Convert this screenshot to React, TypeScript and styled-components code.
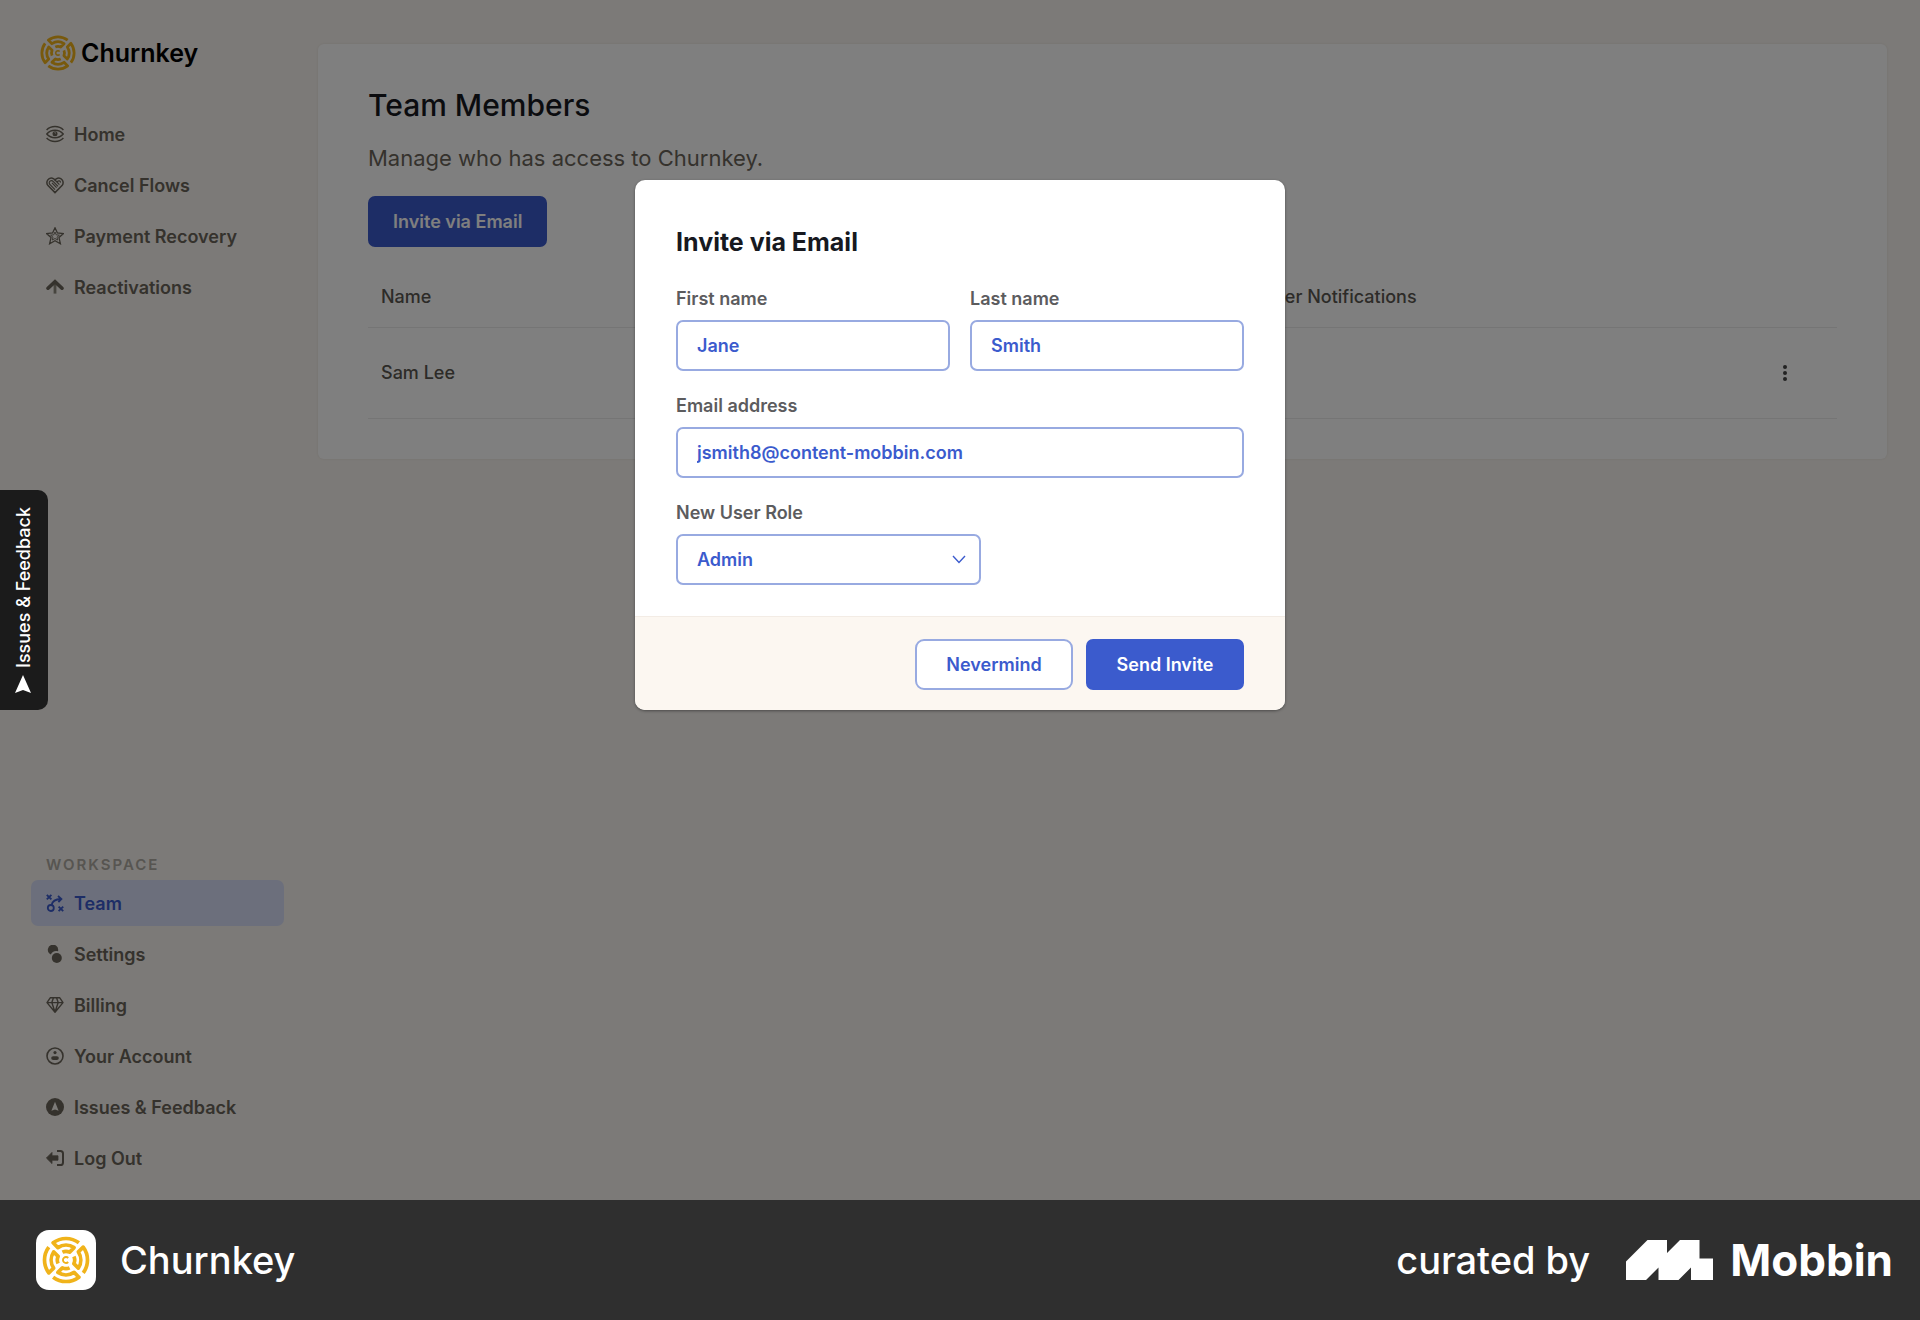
import React, { useState } from "react";
import styled, { createGlobalStyle, css } from "styled-components";

const font = `Inter, "Liberation Sans", sans-serif`;

const color = {
  canvas: "#f9f5f0",
  blue: "#3b5bcd",
  blueSoft: "#98aae1",
  ink: "#17191f",
  stone: "#6b655a",
  label: "#5c5c5e",
  cream: "#fcf7f1",
  line: "#ebebeb",
  gold: "#f0b31a",
};

const GlobalStyle = createGlobalStyle`
  *, *::before, *::after { box-sizing: border-box; }
  body { margin: 0; font-family: ${font}; background: #2f2f2f; }
  h1, h2, p, ul { margin: 0; padding: 0; }
  button, input, select { font-family: inherit; }
`;

const Page = styled.div`
  display: flex;
  flex-direction: column;
  min-height: 100vh;
`;

const Shell = styled.div`
  position: relative;
  display: flex;
  flex: 1;
  background: ${color.canvas};
`;

/* Sidebar */

const Sidebar = styled.aside`
  display: flex;
  flex-direction: column;
  flex: 0 0 318px;
  padding: 32px 34px 19px 31px;
`;

const Brand = styled.a`
  display: flex;
  align-items: center;
  gap: 5px;
  height: 42px;
  padding-left: 9px;
  margin-bottom: 37px;
  color: #000;
  font-size: 25px;
  font-weight: 600;
  text-decoration: none;
`;

const NavList = styled.ul`
  display: flex;
  flex-direction: column;
  gap: 5px;
  list-style: none;
`;

const NavLink = styled.a<{ $active?: boolean }>`
  display: flex;
  align-items: center;
  gap: 10px;
  height: 46px;
  padding: 0 15px;
  border-radius: 7px;
  font-size: 18px;
  font-weight: 600;
  white-space: nowrap;
  text-decoration: none;
  color: ${(p) => (p.$active ? color.blue : color.stone)};
  background: ${(p) => (p.$active ? "#d8dff8" : "transparent")};
`;

const NavHeading = styled.h2`
  margin-top: auto;
  padding: 0 15px 5px;
  color: #aeaaa2;
  font-size: 15px;
  line-height: 20px;
  font-weight: 600;
  letter-spacing: 2px;
  text-transform: uppercase;
`;

/* Team page */

const Main = styled.main`
  flex: 1;
  min-width: 0;
  padding: 44px 33px 44px 0;
`;

const Card = styled.section`
  padding: 40px 50px;
  border-radius: 6px;
  background: #fff;
  box-shadow: 0 0 3px rgba(0, 0, 0, 0.08);
`;

const Title = styled.h1`
  color: ${color.ink};
  font-size: 30px;
  line-height: 42px;
  font-weight: 500;
`;

const Lead = styled.p`
  margin: 17px 0 23px;
  color: ${color.stone};
  font-size: 22px;
  line-height: 30px;
`;

const Button = styled.button<{ $outline?: boolean }>`
  height: 51px;
  padding: 0 23px;
  border: 2px solid ${(p) => (p.$outline ? color.blueSoft : color.blue)};
  border-radius: ${(p) => (p.$outline ? "9px" : "7px")};
  background: ${(p) => (p.$outline ? "#fff" : color.blue)};
  color: ${(p) => (p.$outline ? color.blue : "#fff")};
  font-size: 18px;
  font-weight: 600;
  white-space: nowrap;
  cursor: pointer;
`;

const Table = styled.table`
  width: 100%;
  margin-top: 19px;
  border-collapse: collapse;
  table-layout: fixed;
  color: #5a5751;
  font-size: 18px;
  font-weight: 500;
  text-align: left;
`;

const HeadCell = styled.th<{ $width?: string }>`
  width: ${(p) => p.$width || "auto"};
  height: 61px;
  padding: 0 13px;
  border-bottom: 1px solid ${color.line};
  font-weight: 500;
`;

const Cell = styled.td`
  height: 91px;
  padding: 0 13px;
  border-bottom: 1px solid ${color.line};
`;

const MenuButton = styled.button`
  display: flex;
  padding: 10px;
  margin-left: 10px;
  border: 0;
  background: none;
  color: #444;
  cursor: pointer;
`;

/* Modal */

const Overlay = styled.div`
  position: absolute;
  inset: 0;
  display: flex;
  align-items: flex-start;
  justify-content: center;
  padding-top: 180px;
  background: rgba(0, 0, 0, 0.5);
`;

const Dialog = styled.form`
  width: 650px;
  max-width: 100%;
  overflow: hidden;
  border-radius: 10px;
  background: #fff;
  box-shadow: 0 1px 3px rgba(0, 0, 0, 0.4);
`;

const DialogBody = styled.div`
  display: flex;
  flex-direction: column;
  gap: 21px;
  padding: 40px 41px 31px;
`;

const DialogTitle = styled.h2`
  color: ${color.ink};
  font-size: 25px;
  line-height: 44px;
  font-weight: 700;
`;

const FieldRow = styled.div`
  display: grid;
  grid-template-columns: 1fr 1fr;
  gap: 20px;
`;

const Field = styled.div`
  display: flex;
  flex-direction: column;
  gap: 7px;
`;

const Label = styled.label`
  color: ${color.label};
  font-size: 18px;
  line-height: 28px;
  font-weight: 600;
`;

const control = css`
  width: 100%;
  height: 51px;
  padding: 0 19px;
  border: 2px solid ${color.blueSoft};
  border-radius: 7px;
  outline: 0;
  background: #fff;
  color: ${color.blue};
  font-size: 18px;
  font-weight: 600;
`;

const TextInput = styled.input`
  ${control}
`;

const SelectWrap = styled.div`
  position: relative;
  width: 305px;

  svg {
    position: absolute;
    top: 21px;
    right: 15px;
    pointer-events: none;
  }
`;

const Select = styled.select`
  ${control}
  appearance: none;
`;

const DialogFooter = styled.footer`
  display: flex;
  justify-content: flex-end;
  gap: 13px;
  padding: 22px 41px 20px;
  border-top: 1px solid #f3ece5;
  background: ${color.cream};
`;

const FooterButton = styled(Button)`
  width: 158px;
  padding: 0;
`;

/* Feedback tab */

const FeedbackTab = styled.button`
  position: absolute;
  left: 0;
  top: 490px;
  display: flex;
  align-items: center;
  gap: 7px;
  width: 48px;
  height: 220px;
  padding: 17px 14px 17px 15px;
  border: 0;
  border-radius: 10px 0 0 10px;
  background: #1b1b1b;
  color: #fff;
  font-size: 18px;
  font-weight: 500;
  white-space: nowrap;
  writing-mode: vertical-rl;
  transform: rotate(180deg);
  cursor: pointer;

  svg {
    flex: none;
  }
`;

/* Bottom bar */

const Bar = styled.footer`
  display: flex;
  align-items: center;
  justify-content: space-between;
  height: 120px;
  padding: 0 27px 0 36px;
  background: #2f2f2f;
  color: #fff;
  font-size: 38px;
  font-weight: 500;
`;

const BarGroup = styled.div<{ $gap: number }>`
  display: flex;
  align-items: center;
  gap: ${(p) => p.$gap}px;
`;

const AppTile = styled.span`
  display: grid;
  place-items: center;
  width: 60px;
  height: 60px;
  border-radius: 13px;
  background: #fff;
`;

const Mobbin = styled.span`
  display: flex;
  align-items: center;
  gap: 17px;
  font-size: 44px;
  font-weight: 700;
`;

/* Drawings */

const quadrant =
  "M12.9 -17.2 A21.5 21.5 0 0 0 -12.9 -17.2 L-8.1 -12.4 A14.8 14.8 0 0 1 8.1 -12.4 L3.6 -7.9 A8.6 8.6 0 0 0 -3.6 -7.9";

function ChurnkeyMark({ size }: { size: number }) {
  return (
    <svg width={size} height={size} viewBox="-24 -24 48 48" fill="none" stroke={color.gold} strokeWidth="3.7" strokeLinejoin="round" aria-hidden="true">
      {[0, 90, 180, 270].map((turn) => (
        <path key={turn} d={quadrant} transform={`rotate(${turn})`} />
      ))}
      <path d="M2.2 -2 A3 3 0 1 0 2.2 2" strokeWidth="1.9" />
    </svg>
  );
}

type IconName = "eye" | "heart" | "star" | "up" | "play" | "dots" | "gem" | "user" | "compass" | "logout";

const iconShapes: Record<IconName, React.ReactNode> = {
  eye: (
    <>
      <path d="M.6 5 C5 .4 13 .4 17.4 5 M.6 13 C5 17.6 13 17.6 17.4 13" />
      <path d="M.8 9 C5 4 13 4 17.2 9 C13 14 5 14 .8 9Z" />
      <circle cx="9" cy="8.8" r="2.5" fill="currentColor" stroke="none" />
      <path d="M8.6 7.4 l1.2 .8" stroke={color.canvas} strokeWidth="1" />
    </>
  ),
  heart: (
    <>
      <path d="M9 16.6 L2 9.6 C-.8 6 2.4 1.2 6.4 2.2 C7.6 2.5 8.4 3.2 9 4 C9.6 3.2 10.4 2.5 11.6 2.2 C15.6 1.2 18.8 6 16 9.6Z" />
      <path d="M9 13.6 L3.6 8.2 C2.6 6.6 3.6 4.6 5.4 4.6 C6.4 4.6 7 5.2 7.6 5.8 L12 10.4 M6 6.8 L10.6 11.6 M9 4 L13.4 8.6 M11.2 6.2 C11.8 4 14.8 4.6 14.4 6.6" strokeWidth="1.2" />
    </>
  ),
  star: (
    <>
      <path d="M9 .8 L11.4 6 L17.4 6.6 L13 10.6 L14.4 16.8 L9 13.8 L3.6 16.8 L5 10.6 L.6 6.6 L6.6 6Z" strokeWidth="1.3" />
      <path d="M9 5 L10.2 7.8 L13.4 8.2 L11 10.2 L11.7 13 L9 11.5 L6.3 13 L7 10.2 L4.6 8.2 L7.8 7.8Z" strokeWidth=".9" />
    </>
  ),
  up: (
    <>
      <path d="M2 10.2 L9 3.6 L16 10.2" strokeWidth="3.6" strokeLinecap="round" />
      <path d="M9 5 V15.6" strokeWidth="2.8" opacity=".75" />
    </>
  ),
  play: (
    <>
      <path d="M.8 .8 L5.4 5.4 M5.4 .8 L.8 5.4 M12.6 12.6 L17.2 17.2 M17.2 12.6 L12.6 17.2" strokeWidth="1.9" />
      <circle cx="4.8" cy="14" r="3" strokeWidth="1.8" />
      <path d="M5.6 11 C6.4 7.4 9.4 5.2 14.6 5 M12 2 L15.4 5 L12.4 8.2" strokeWidth="1.8" />
    </>
  ),
  dots: (
    <g fill="currentColor" stroke="none">
      <path d="M3.4 8.6 A5.2 5.2 0 1 1 12.2 5 C12.2 5.6 12.2 5.9 12 6.2 C8.8 5.2 6 6.6 4.9 9.4 C4.3 9.2 3.8 8.9 3.4 8.6Z" />
      <circle cx="10.8" cy="13" r="5" />
    </g>
  ),
  gem: (
    <path d="M4.2 1.8 H13.8 L17 6.6 L9 16.2 L1 6.6Z M1 6.6 H17 M9 16 L5.8 6.6 L7.4 2 M9 16 L12.2 6.6 L10.6 2" strokeWidth="1.4" strokeLinejoin="round" />
  ),
  user: (
    <>
      <circle cx="9" cy="9" r="8" strokeWidth="1.6" />
      <circle cx="9" cy="5.6" r="1.6" fill="currentColor" stroke="none" />
      <rect x="5.2" y="9.2" width="7.6" height="3.8" rx="1.9" fill="currentColor" stroke="none" />
    </>
  ),
  compass: (
    <>
      <circle cx="9" cy="9" r="9" fill="currentColor" stroke="none" />
      <path d="M9 3.8 L12.6 12.8 L9 11.4 L5.4 12.8Z" fill={color.canvas} stroke="none" />
    </>
  ),
  logout: (
    <>
      <path d="M.4 9 L6 3.4 V6.8 H12 V11.2 H6 V14.6Z" fill="currentColor" strokeWidth=".8" strokeLinejoin="round" />
      <path d="M11 2 H14.4 Q17 2 17 4.6 V13.4 Q17 16 14.4 16 H11" strokeWidth="2" />
    </>
  ),
};

function Icon({ name }: { name: IconName }) {
  return (
    <svg width="18" height="18" viewBox="0 0 18 18" fill="none" stroke="currentColor" strokeWidth="1.5" aria-hidden="true">
      {iconShapes[name]}
    </svg>
  );
}

const productLinks: { icon: IconName; text: string }[] = [
  { icon: "eye", text: "Home" },
  { icon: "heart", text: "Cancel Flows" },
  { icon: "star", text: "Payment Recovery" },
  { icon: "up", text: "Reactivations" },
];

const workspaceLinks: { icon: IconName; text: string; active?: boolean }[] = [
  { icon: "play", text: "Team", active: true },
  { icon: "dots", text: "Settings" },
  { icon: "gem", text: "Billing" },
  { icon: "user", text: "Your Account" },
  { icon: "compass", text: "Issues & Feedback" },
  { icon: "logout", text: "Log Out" },
];

function Nav({ links }: { links: { icon: IconName; text: string; active?: boolean }[] }) {
  return (
    <NavList>
      {links.map((link) => (
        <li key={link.text}>
          <NavLink href="#" $active={link.active} aria-current={link.active ? "page" : undefined}>
            <Icon name={link.icon} />
            {link.text}
          </NavLink>
        </li>
      ))}
    </NavList>
  );
}

function InviteDialog() {
  const [first, setFirst] = useState("Jane");
  const [last, setLast] = useState("Smith");
  const [email, setEmail] = useState("jsmith8@content-mobbin.com");
  const [role, setRole] = useState("Admin");

  return (
    <Dialog role="dialog" aria-labelledby="invite-title" onSubmit={(e) => e.preventDefault()}>
      <DialogBody>
        <DialogTitle id="invite-title">Invite via Email</DialogTitle>
        <FieldRow>
          <Field>
            <Label htmlFor="first">First name</Label>
            <TextInput id="first" value={first} onChange={(e) => setFirst(e.target.value)} />
          </Field>
          <Field>
            <Label htmlFor="last">Last name</Label>
            <TextInput id="last" value={last} onChange={(e) => setLast(e.target.value)} />
          </Field>
        </FieldRow>
        <Field>
          <Label htmlFor="email">Email address</Label>
          <TextInput id="email" type="email" value={email} onChange={(e) => setEmail(e.target.value)} />
        </Field>
        <Field>
          <Label htmlFor="role">New User Role</Label>
          <SelectWrap>
            <Select id="role" value={role} onChange={(e) => setRole(e.target.value)}>
              <option>Admin</option>
            </Select>
            <svg width="14" height="9" viewBox="0 0 14 9" fill="none" stroke={color.blue} strokeWidth="1.4" aria-hidden="true">
              <path d="M1 1 L7 7.4 L13 1" />
            </svg>
          </SelectWrap>
        </Field>
      </DialogBody>
      <DialogFooter>
        <FooterButton type="button" $outline>
          Nevermind
        </FooterButton>
        <FooterButton type="submit">Send Invite</FooterButton>
      </DialogFooter>
    </Dialog>
  );
}

export default function App() {
  return (
    <Page>
      <GlobalStyle />
      <Shell>
        <Sidebar>
          <Brand href="#">
            <ChurnkeyMark size={36} />
            Churnkey
          </Brand>
          <Nav links={productLinks} />
          <NavHeading>Workspace</NavHeading>
          <Nav links={workspaceLinks} />
        </Sidebar>
        <Main>
          <Card>
            <Title>Team Members</Title>
            <Lead>Manage who has access to Churnkey.</Lead>
            <Button type="button">Invite via Email</Button>
            <Table>
              <thead>
                <tr>
                  <HeadCell scope="col" $width="57%">Name</HeadCell>
                  <HeadCell scope="col">Customer Notifications</HeadCell>
                  <HeadCell scope="col" $width="88px" aria-label="Actions" />
                </tr>
              </thead>
              <tbody>
                <tr>
                  <Cell>Sam Lee</Cell>
                  <Cell />
                  <Cell>
                    <MenuButton type="button" aria-label="Member actions">
                      <svg width="6" height="18" viewBox="0 0 6 18" fill="currentColor" aria-hidden="true">
                        <circle cx="3" cy="3" r="2" />
                        <circle cx="3" cy="9" r="2" />
                        <circle cx="3" cy="15" r="2" />
                      </svg>
                    </MenuButton>
                  </Cell>
                </tr>
              </tbody>
            </Table>
          </Card>
        </Main>
        <Overlay>
          <InviteDialog />
        </Overlay>
        <FeedbackTab type="button">
          <svg width="18" height="18" viewBox="0 0 18 18" fill="currentColor" aria-hidden="true">
            <path d="M9 18 L17 0 L9 3 L1 0Z" />
          </svg>
          Issues &amp; Feedback
        </FeedbackTab>
      </Shell>
      <Bar>
        <BarGroup $gap={24}>
          <AppTile>
            <ChurnkeyMark size={48} />
          </AppTile>
          Churnkey
        </BarGroup>
        <BarGroup $gap={36}>
          curated by
          <Mobbin>
            <svg width="87" height="40" viewBox="0 0 87 40" fill="#fff" aria-hidden="true">
              <path d="M0 21.5 L21.5 0 H41 V13 L54 0 H73.5 V18.5 H87 V40 H65 V27.5 L52.5 40 H32.5 V27.5 L20 40 H0Z" />
            </svg>
            Mobbin
          </Mobbin>
        </BarGroup>
      </Bar>
    </Page>
  );
}
